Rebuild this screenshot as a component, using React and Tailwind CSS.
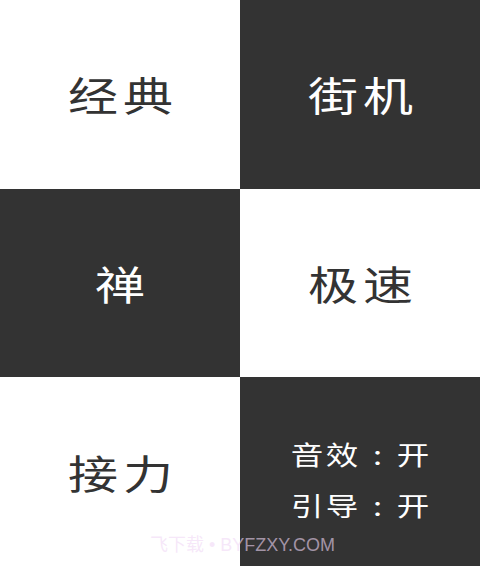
import React from "react";

const font = { fontFamily: '"Noto Sans CJK SC", "Noto Sans", sans-serif' };

function Cell({ dark, children }) {
  return (
    <div
      className={
        "flex items-center justify-center " +
        (dark ? "bg-[#333333] text-white" : "bg-white text-[#333333]")
      }
    >
      {children}
    </div>
  );
}

function Label({ text }) {
  return (
    <div className="flex text-[40px] leading-none font-normal">
      {Array.from(text).map((c, i) => (
        <span key={i} className="w-[55px] flex justify-center">
          <span className="inline-block scale-x-125">{c}</span>
        </span>
      ))}
    </div>
  );
}

function Setting({ text }) {
  return (
    <div className="flex text-[26px] leading-[28px] font-normal">
      {Array.from(text).map((c, i) => (
        <span key={i} className="w-[35.5px] flex justify-center">
          <span className="inline-block scale-x-125">{c}</span>
        </span>
      ))}
    </div>
  );
}

export default function App() {
  return (
    <div
      className="relative w-[480px] h-[566px] grid grid-cols-2 grid-rows-3 overflow-hidden"
      style={font}
    >
      <Cell>
        <Label text="经典" />
      </Cell>
      <Cell dark>
        <Label text="街机" />
      </Cell>
      <Cell dark>
        <Label text="禅" />
      </Cell>
      <Cell>
        <Label text="极速" />
      </Cell>
      <Cell>
        <Label text="接力" />
      </Cell>
      <Cell dark>
        <div className="flex flex-col items-center gap-[23px] pt-[16px]">
          <Setting text="音效:开" />
          <Setting text="引导:开" />
        </div>
      </Cell>
      <div
        className="absolute left-[150px] top-[533px] text-[18px] leading-[24px] text-[rgba(240,215,245,0.6)] whitespace-nowrap"
        style={{ fontFamily: '"Liberation Sans", "Noto Sans CJK SC", sans-serif' }}
      >
        飞下载 • BYFZXY.COM
      </div>
    </div>
  );
}
